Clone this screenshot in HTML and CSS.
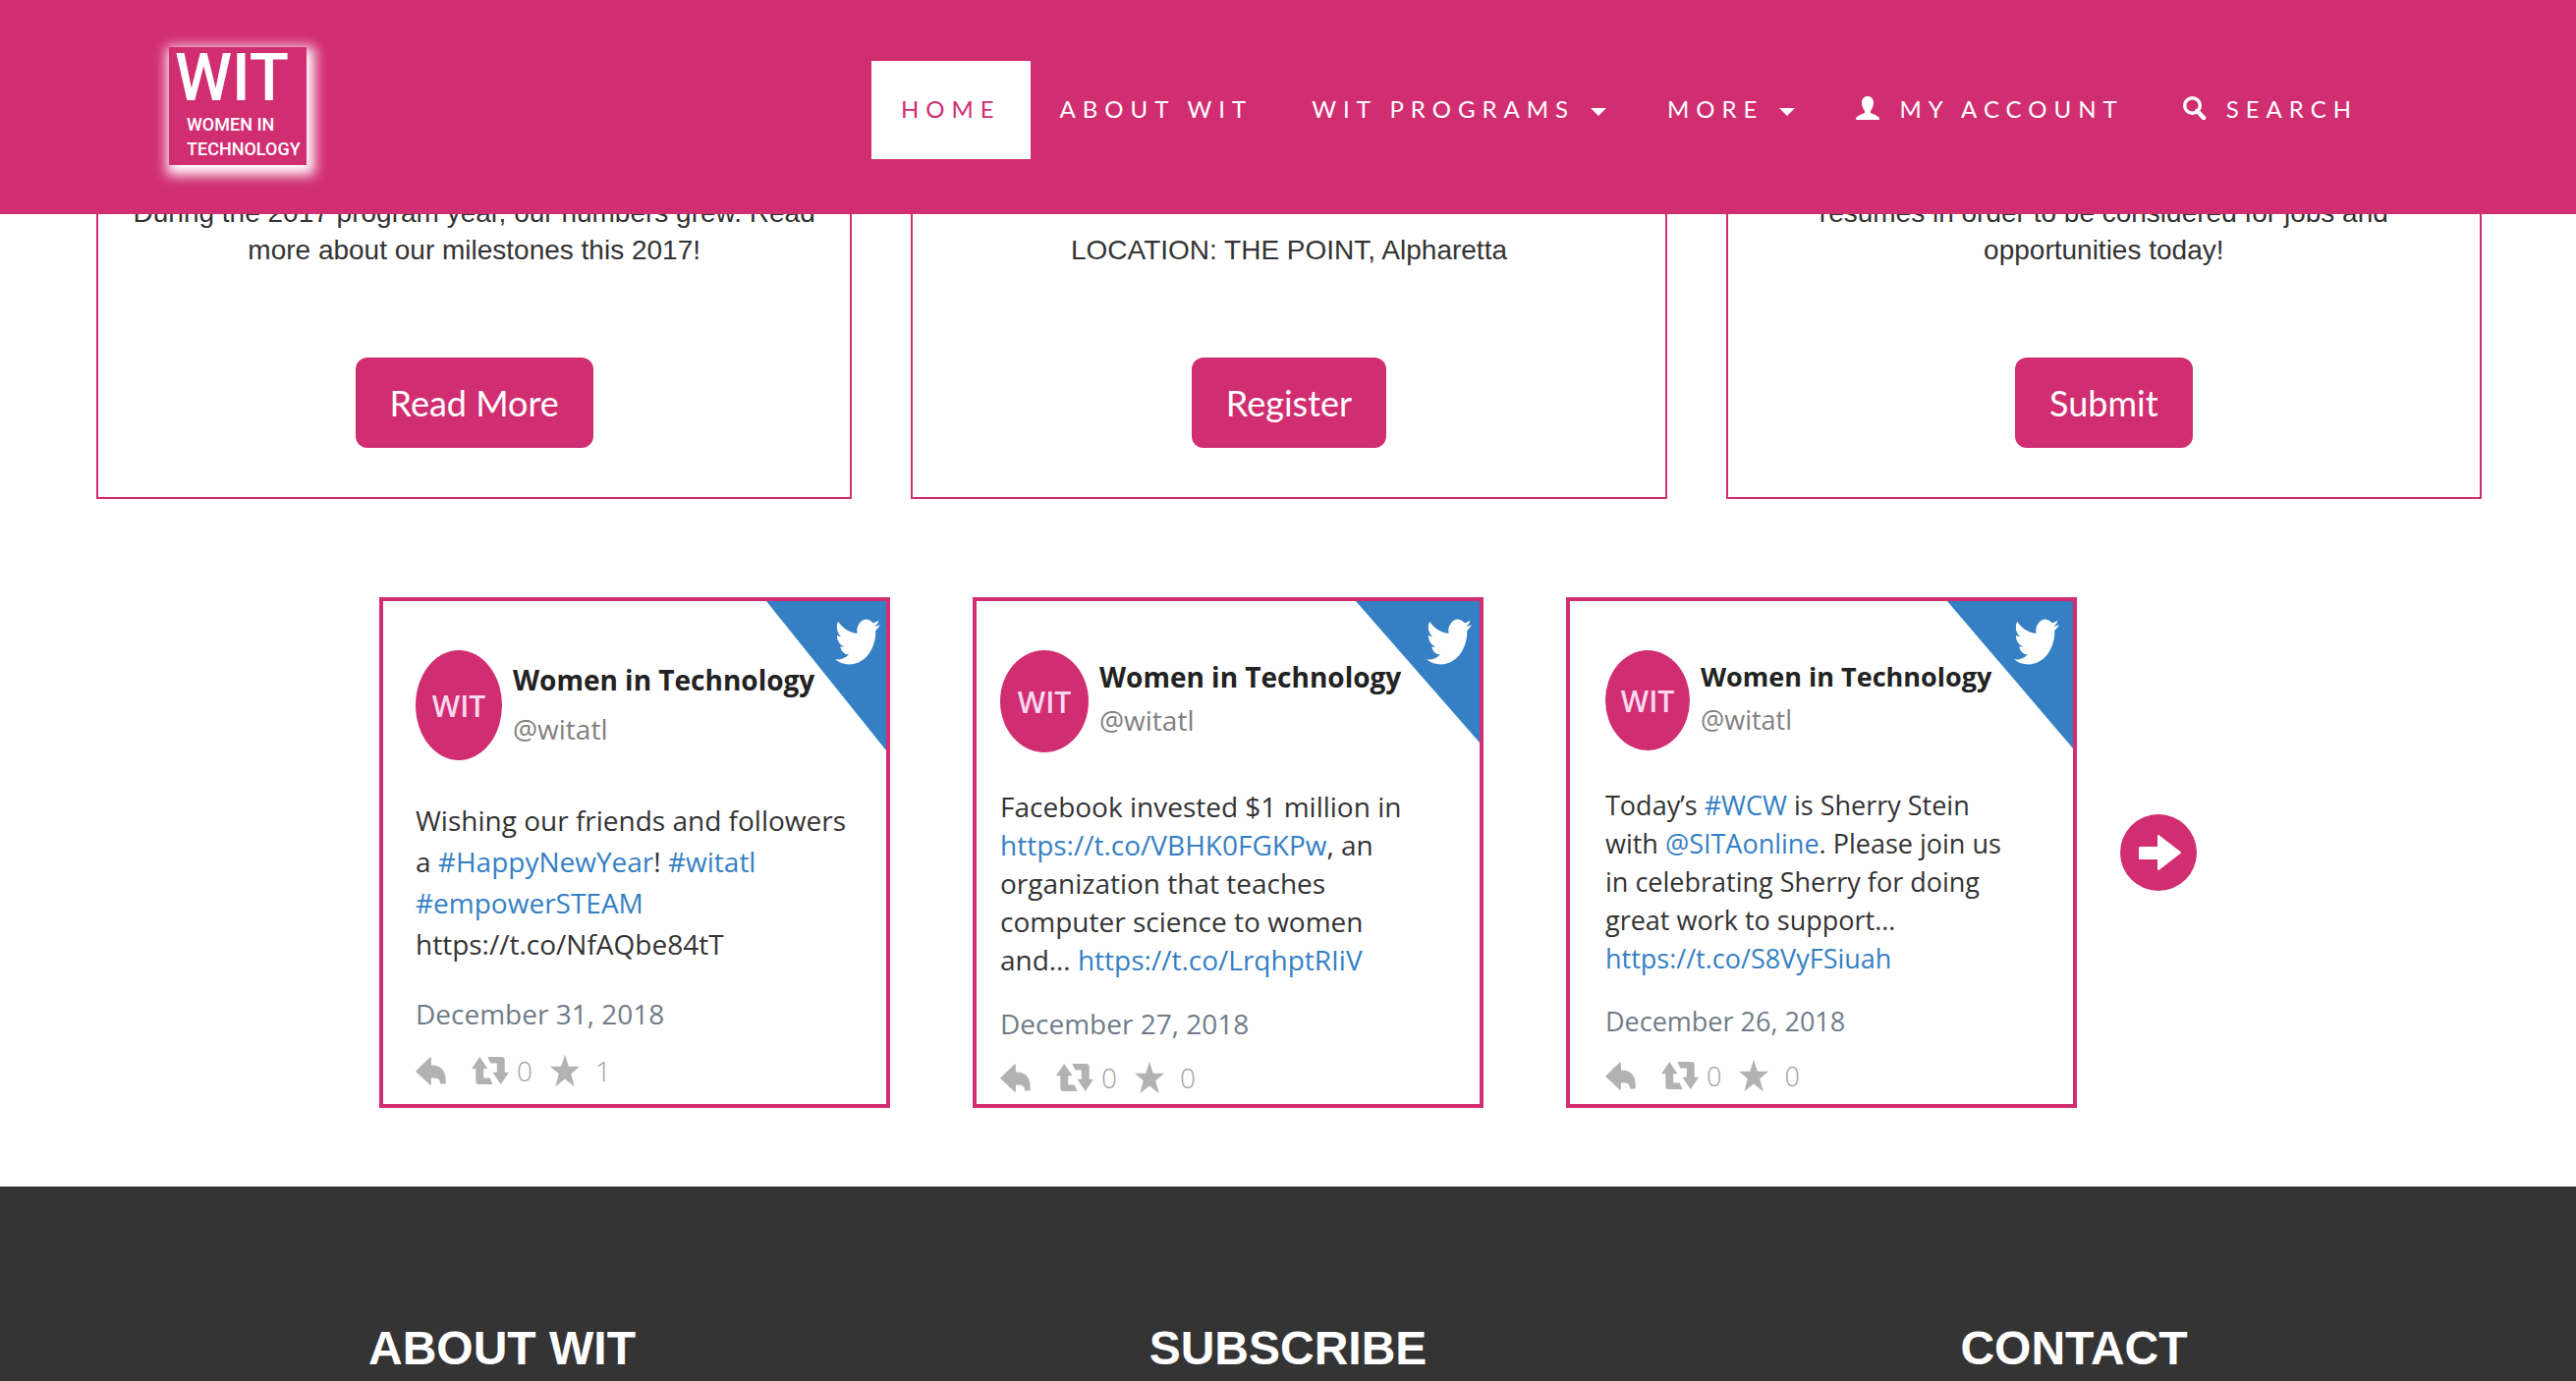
FILE: index.html
```html
<!DOCTYPE html>
<html lang="en">
<head>
<meta charset="utf-8">
<title>Women in Technology</title>
<meta name="viewport" content="width=device-width, initial-scale=1">
<link rel="stylesheet" href="styles.css">
</head>
<body>
<svg class="sprite" aria-hidden="true">
  <symbol id="bird" viewBox="0 2 24 20" preserveAspectRatio="none"><path d="M23.953 4.57a10 10 0 01-2.825.775 4.958 4.958 0 002.163-2.723c-.951.555-2.005.959-3.127 1.184a4.92 4.92 0 00-8.384 4.482C7.69 8.095 4.067 6.13 1.64 3.162a4.822 4.822 0 00-.666 2.475c0 1.71.87 3.213 2.188 4.096a4.904 4.904 0 01-2.228-.616v.06a4.923 4.923 0 003.946 4.827 4.996 4.996 0 01-2.212.085 4.936 4.936 0 004.604 3.417 9.867 9.867 0 01-6.102 2.105c-.39 0-.779-.023-1.17-.067a13.995 13.995 0 007.557 2.209c9.053 0 13.998-7.496 13.998-13.985 0-.21 0-.42-.015-.63A9.935 9.935 0 0024 4.59z"/></symbol>
  <symbol id="corner" viewBox="0 0 10 10" preserveAspectRatio="none"><path d="M0 0H10V10Z"/></symbol>
  <symbol id="reply" viewBox="0 0 86 82"><path d="M2 42 42 3V26C70 24 86 40 84 76H72C72 62 64 58 42 58V79Z" stroke="currentColor" stroke-width="4" stroke-linejoin="round"/></symbol>
  <symbol id="retweet" viewBox="0 0 106 82"><path d="M23 2 46 36H34V62H52L60 80H22Q12 80 12 72V36H0ZM46 2H84Q94 2 94 10V46H106L83 80 60 46H72V20H54Z"/></symbol>
  <symbol id="star" viewBox="0 0 24 26"><path d="M12 0 15 9.500 24 9.500 17 15.500 19.700 26 12 19.800 4.300 26 7 15.500 0 9.500 9 9.500Z"/></symbol>
</svg>

<header class="site-header">
  <a class="logo" href="#">
    <span class="logo-mark">WIT</span>
    <span class="logo-name">WOMEN IN<br>TECHNOLOGY</span>
  </a>
  <nav class="nav" aria-label="Main">
    <a class="nav-item nav-item-active" href="#">HOME</a>
    <a class="nav-item" href="#">ABOUT WIT</a>
    <button class="nav-item" type="button">WIT PROGRAMS<span class="caret"></span></button>
    <button class="nav-item" type="button">MORE<span class="caret"></span></button>
    <a class="nav-item nav-item-icon" href="#"><svg class="nav-icon" viewBox="0 0 24 24" aria-hidden="true"><path fill="currentColor" d="M12 0C8.500 0 6 2.500 6 6.500 6 10 7.500 13 9 15V17C6 18.500 2 19.500.5 21.500L0 24H24L23.500 21.500C22 19.500 18 18.500 15 17V15C16.500 13 18 10 18 6.500 18 2.500 15.500 0 12 0Z"/></svg>MY ACCOUNT</a>
    <a class="nav-item nav-item-icon" href="#"><svg class="nav-icon" viewBox="0 0 24 24" aria-hidden="true"><g fill="none" stroke="currentColor"><circle cx="9.500" cy="9.500" r="7.800" stroke-width="3.400"/><path d="M14.500 15 21 22" stroke-width="4.600" stroke-linecap="round"/></g></svg>SEARCH</a>
  </nav>
</header>

<main>
  <section class="cards" aria-label="Highlights">
    <article class="card">
      <p class="card-text">During the 2017 program year, our numbers grew. Read more about our milestones this 2017!</p>
      <button class="button" type="button">Read More</button>
    </article>
    <article class="card">
      <p class="card-text">LOCATION: THE POINT, Alpharetta</p>
      <button class="button" type="button">Register</button>
    </article>
    <article class="card">
      <p class="card-text">resumes in order to be considered for jobs and<br>opportunities today!</p>
      <button class="button" type="button">Submit</button>
    </article>
  </section>

  <section class="feed" aria-label="Tweets">
    <div class="tweets">
      <article class="tweet tweet-short">
        <svg class="tweet-corner" aria-hidden="true"><use href="#corner"/></svg>
        <svg class="tweet-bird" aria-hidden="true"><use href="#bird"/></svg>
        <div class="tweet-head">
          <div class="avatar">WIT</div>
          <div class="author"><strong>Women in Technology</strong><span>@witatl</span></div>
        </div>
        <p class="tweet-body">Wishing our friends and followers<br>a <a href="#">#HappyNewYear</a>! <a href="#">#witatl</a><br><a href="#">#empowerSTEAM</a><br>https://t.co/NfAQbe84tT</p>
        <time class="tweet-date" datetime="2018-12-31">December 31, 2018</time>
        <div class="actions">
          <svg class="icon-reply" aria-hidden="true"><use href="#reply"/></svg>
          <svg class="icon-retweet" aria-hidden="true"><use href="#retweet"/></svg><span>0</span>
          <svg class="icon-star" aria-hidden="true"><use href="#star"/></svg><span class="likes">1</span>
        </div>
      </article>
      <article class="tweet tweet-wide">
        <svg class="tweet-corner" aria-hidden="true"><use href="#corner"/></svg>
        <svg class="tweet-bird" aria-hidden="true"><use href="#bird"/></svg>
        <div class="tweet-head">
          <div class="avatar">WIT</div>
          <div class="author"><strong>Women in Technology</strong><span>@witatl</span></div>
        </div>
        <p class="tweet-body">Facebook invested $1 million in<br><a href="#">https://t.co/VBHK0FGKPw</a>, an<br>organization that teaches<br>computer science to women<br>and… <a href="#">https://t.co/LrqhptRIiV</a></p>
        <time class="tweet-date" datetime="2018-12-27">December 27, 2018</time>
        <div class="actions">
          <svg class="icon-reply" aria-hidden="true"><use href="#reply"/></svg>
          <svg class="icon-retweet" aria-hidden="true"><use href="#retweet"/></svg><span>0</span>
          <svg class="icon-star" aria-hidden="true"><use href="#star"/></svg><span class="likes">0</span>
        </div>
      </article>
      <article class="tweet tweet-narrow">
        <svg class="tweet-corner" aria-hidden="true"><use href="#corner"/></svg>
        <svg class="tweet-bird" aria-hidden="true"><use href="#bird"/></svg>
        <div class="tweet-head">
          <div class="avatar">WIT</div>
          <div class="author"><strong>Women in Technology</strong><span>@witatl</span></div>
        </div>
        <p class="tweet-body">Today’s <a href="#">#WCW</a> is Sherry Stein<br>with <a href="#">@SITAonline</a>. Please join us<br>in celebrating Sherry for doing<br>great work to support…<br><a href="#">https://t.co/S8VyFSiuah</a></p>
        <time class="tweet-date" datetime="2018-12-26">December 26, 2018</time>
        <div class="actions">
          <svg class="icon-reply" aria-hidden="true"><use href="#reply"/></svg>
          <svg class="icon-retweet" aria-hidden="true"><use href="#retweet"/></svg><span>0</span>
          <svg class="icon-star" aria-hidden="true"><use href="#star"/></svg><span class="likes">0</span>
        </div>
      </article>
    </div>
    <button class="next" type="button" aria-label="Next tweets"><svg viewBox="0 0 78 78" aria-hidden="true"><path fill="#fff" stroke="#fff" stroke-width="2" stroke-linejoin="round" d="M20 34H39V22L61 39 39 56V45H20Z"/></svg></button>
  </section>
</main>

<footer class="footer">
  <h2>ABOUT WIT</h2>
  <h2>SUBSCRIBE</h2>
  <h2>CONTACT</h2>
</footer>
</body>
</html>
```
FILE: styles.css
```css
:root {
  --pink: #d12e72;
  --blue: #3580c4;
}

* {
  box-sizing: border-box;
}

body {
  display: flex;
  flex-direction: column;
  min-height: 100vh;
  margin: 0;
  background: #fff;
  color: #333;
  font-family: "Liberation Sans", Arial, sans-serif;
  font-size: 28px;
}

a {
  color: var(--blue);
  text-decoration: none;
}

button {
  border: 0;
  background: none;
  color: inherit;
  font: inherit;
  cursor: pointer;
}

p,
h2 {
  margin: 0;
}

.sprite {
  position: absolute;
  width: 0;
  height: 0;
}

/* Header */

.site-header {
  position: fixed;
  inset: 0 0 auto;
  z-index: 10;
  display: flex;
  align-items: flex-start;
  justify-content: space-between;
  height: 218px;
  padding: 48px 192px 0 172px;
  background: var(--pink);
}

.logo {
  display: flex;
  flex-direction: column;
  gap: 5px;
  width: 140px;
  height: 120px;
  padding: 3px 0 0 6px;
  background: var(--pink);
  box-shadow: 3px 5px 12px 5px #fff;
  color: #fff;
  font-family: Roboto, sans-serif;
}

.logo-mark {
  font-size: 66px;
  font-weight: 500;
  line-height: 58px;
}

.logo-name {
  padding-left: 12px;
  font-size: 18px;
  font-weight: 500;
  line-height: 25px;
}

.nav {
  display: flex;
  padding-top: 14px;
}

.nav-item {
  display: flex;
  align-items: center;
  height: 100px;
  padding: 0 30px 3px;
  color: #fff;
  font-family: Lato, sans-serif;
  font-size: 24px;
  letter-spacing: 7px;
  white-space: nowrap;
}

.nav-item-active {
  background: #fff;
  color: var(--pink);
}

.nav-icon {
  width: 24px;
  height: 24px;
  margin: 0 20px 2px 0;
}

.caret {
  margin: 6px 2px 0 16px;
  border: 8px solid transparent;
  border-top-color: #fff;
  border-bottom: 0;
}

/* Highlight cards */

.cards {
  display: grid;
  grid-template-columns: repeat(3, 1fr);
  gap: 60px;
  padding: 160px 96px 0 98px;
}

.card {
  display: flex;
  flex-direction: column;
  align-items: center;
  justify-content: flex-end;
  gap: 90px;
  padding: 36px 32px 50px;
  border: 2px solid var(--pink);
}

.card-text {
  line-height: 38px;
  text-align: center;
}

.button {
  height: 92px;
  padding: 0 35px;
  border-radius: 12px;
  background: var(--pink);
  color: #fff;
  font-family: Lato, sans-serif;
  font-size: 36px;
}

/* Tweets */

.feed {
  display: flex;
  align-items: center;
  justify-content: center;
  gap: 44px;
  padding: 100px 0 80px;
}

.tweets {
  display: flex;
  gap: 84px;
}

.tweet {
  position: relative;
  width: 520px;
  min-height: 520px;
  padding: 50px 0 0 var(--inset);
  border: 4px solid var(--pink);
  font-family: "Open Sans", sans-serif;
}

.tweet-short {
  --inset: 33px;
  --avatar-width: 88px;
  --avatar-height: 112px;
  --author-line: 50px;
  --body-gap: 40px;
  --body-line: 42px;
  --date-gap: 29px;
  --actions-gap: 17px;
  --corner-width: 122px;
  --corner-height: 152px;
  --bird-right: 6px;
}

.tweet-wide {
  --inset: 24px;
  --avatar-width: 90px;
  --avatar-height: 104px;
  --author-line: 44px;
  --body-gap: 36px;
  --body-line: 39px;
  --date-gap: 24px;
  --actions-gap: 14px;
  --corner-width: 126px;
  --corner-height: 144px;
  --bird-right: 8px;
}

.tweet-narrow {
  --inset: 36px;
  --avatar-width: 86px;
  --avatar-height: 102px;
  --author-line: 44px;
  --body-gap: 36px;
  --body-line: 39px;
  --date-gap: 24px;
  --actions-gap: 14px;
  --corner-width: 128px;
  --corner-height: 150px;
  --bird-right: 14px;
  font-size: 27px;
}

.tweet-corner {
  position: absolute;
  top: 0;
  right: 0;
  width: var(--corner-width);
  height: var(--corner-height);
  fill: var(--blue);
}

.tweet-bird {
  position: absolute;
  top: 18px;
  right: var(--bird-right);
  width: 46px;
  height: 47px;
  fill: #fff;
}

.tweet-head {
  display: flex;
  gap: 11px;
}

.avatar {
  display: flex;
  align-items: center;
  justify-content: center;
  width: var(--avatar-width);
  height: var(--avatar-height);
  border-radius: 50%;
  background: var(--pink);
  color: #f9d9f0;
  font-size: 30px;
  font-weight: 600;
}

.author {
  display: flex;
  flex-direction: column;
  padding-top: 5px;
  line-height: var(--author-line);
}

.author strong {
  color: #222;
}

.author span {
  color: #808080;
}

.tweet-body {
  padding-top: var(--body-gap);
  line-height: var(--body-line);
}

.tweet-date {
  display: block;
  padding-top: var(--date-gap);
  color: #6f7c88;
  line-height: 42px;
}

.actions {
  display: flex;
  align-items: center;
  height: 40px;
  margin-top: var(--actions-gap);
  color: #a0a0a0;
  font-weight: 300;
}

.actions svg {
  color: #b2b2b2;
  fill: currentColor;
}

.icon-reply {
  width: 31px;
  height: 29px;
  margin-right: 26px;
}

.icon-retweet {
  width: 38px;
  height: 30px;
  margin-right: 8px;
}

.icon-star {
  width: 30px;
  height: 34px;
  margin: 0 16px 0 18px;
}

.next {
  width: 78px;
  height: 78px;
  padding: 0;
  border-radius: 50%;
  background: var(--pink);
}

.next svg {
  display: block;
}

/* Footer */

.footer {
  display: grid;
  flex: 1;
  grid-template-columns: repeat(3, 1fr);
  padding: 138px 111px 0;
  background: #343434;
  color: #fff;
  text-align: center;
}

.footer h2 {
  font-size: 48px;
  line-height: 54px;
}
```
